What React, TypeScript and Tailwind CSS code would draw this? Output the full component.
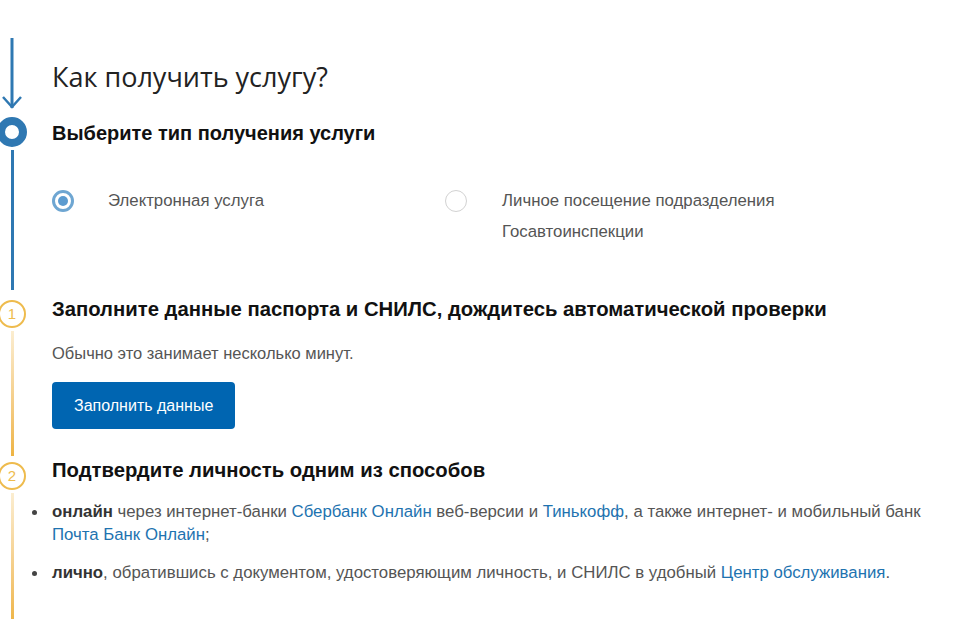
import React from 'react';

const arial = { fontFamily: '"Liberation Sans", Arial, sans-serif' };

const Radio = ({ checked }: { checked?: boolean }) =>
  checked ? (
    <span className="flex h-[22px] w-[22px] shrink-0 items-center justify-center rounded-full border-[3px] border-[#6ea6d2]">
      <span className="block h-[10px] w-[10px] rounded-full bg-[#5b9bd0]" />
    </span>
  ) : (
    <span className="block h-[22px] w-[22px] shrink-0 rounded-full border border-[#d2d2d2]" />
  );

const StepNumber = ({ n }: { n: number }) => (
  <div className="flex h-[28px] w-[28px] shrink-0 items-center justify-center rounded-full border-[2.5px] border-[#eebb4d] bg-white text-[15px] text-[#eebb4d]">
    {n}
  </div>
);

const App = () => {
  return (
    <div className="min-h-screen bg-white pt-[38px] text-[#555]" style={arial}>
      {/* intro */}
      <div className="flex h-[79px]">
        <div className="flex w-[24px] shrink-0 justify-center">
          <svg width="24" height="72" viewBox="0 0 24 72" fill="none">
            <line x1="12" y1="0" x2="12" y2="70" stroke="#2f78b2" strokeWidth="3" />
            <polyline points="3,59 12,69 21,59" stroke="#2f78b2" strokeWidth="2.5" fill="none" />
          </svg>
        </div>
        <h1
          className="ml-[28px] mt-[22px] text-[27px] leading-[34px] text-[#222]"
          style={{ fontFamily: '"Open Sans", sans-serif' }}
        >
          Как получить услугу?
        </h1>
      </div>

      {/* step: type */}
      <div className="flex">
        <div className="flex w-[24px] shrink-0 flex-col items-center">
          <div className="h-[30px] w-[30px] shrink-0 rounded-full border-[8px] border-[#2f78b2]" />
          <div className="mb-[10px] mt-[3px] w-[3px] flex-1 bg-[#2f78b2]" />
        </div>
        <div className="ml-[28px] pb-[53px]">
          <h2 className="text-[20px] font-bold leading-[32px] text-[#111]">Выберите тип получения услуги</h2>
          <div className="mt-[36px] flex">
            <label className="flex w-[393px] items-start">
              <span className="mt-[4.5px]">
                <Radio checked />
              </span>
              <span className="ml-[34px] text-[16.8px] leading-[31px]">Электронная услуга</span>
            </label>
            <label className="flex items-start">
              <span className="mt-[4.5px]">
                <Radio />
              </span>
              <span className="ml-[35px] w-[300px] text-[16.8px] leading-[31px]">
                Личное посещение подразделения Госавтоинспекции
              </span>
            </label>
          </div>
        </div>
      </div>

      {/* step 1 */}
      <div className="flex">
        <div className="flex w-[24px] shrink-0 flex-col items-center">
          <StepNumber n={1} />
          <div className="mb-[6px] mt-[3px] w-[3px] flex-1 bg-gradient-to-b from-[#fbedd0] to-[#eeb442]" />
        </div>
        <div className="ml-[28px] pb-[33px]">
          <h2 className="-mt-[5px] text-[20.3px] font-bold leading-[28px] text-[#111]">
            Заполните данные паспорта и СНИЛС, дождитесь автоматической проверки
          </h2>
          <p className="mt-[18px] text-[16.5px] leading-[24px]">Обычно это занимает несколько минут.</p>
          <button className="mt-[17px] h-[47px] rounded-[4px] bg-[#0065b1] px-[22px] text-[16px] text-white">
            Заполнить данные
          </button>
        </div>
      </div>

      {/* step 2 */}
      <div className="flex">
        <div className="flex w-[24px] shrink-0 flex-col items-center">
          <StepNumber n={2} />
          <div className="mt-[3px] w-[3px] flex-1 bg-gradient-to-b from-[#fbedd0] to-[#eeb442]" />
        </div>
        <div className="ml-[28px] pb-[40px]">
          <h2 className="-mt-[6px] text-[20.3px] font-bold leading-[28px] text-[#111]">
            Подтвердите личность одним из способов
          </h2>
          <ul className="mt-[16px] w-[885px] text-[16.8px] leading-[23px]">
            <li className="relative">
              <span className="absolute left-[-20px] top-[10px] h-[5px] w-[5px] rounded-full bg-[#444]" />
              <b className="text-[#333]">онлайн</b> через интернет-банки{' '}
              <a className="text-[#1e73b0]">Сбербанк Онлайн</a> веб-версии и{' '}
              <a className="text-[#1e73b0]">Тинькофф</a>, а также интернет- и мобильный банк{' '}
              <a className="text-[#1e73b0]">Почта Банк Онлайн</a>;
            </li>
            <li className="relative mt-[15px]">
              <span className="absolute left-[-20px] top-[10px] h-[5px] w-[5px] rounded-full bg-[#444]" />
              <b className="text-[#333]">лично</b>, обратившись с документом, удостоверяющим личность, и СНИЛС в удобный{' '}
              <a className="text-[#1e73b0]">Центр обслуживания</a>.
            </li>
          </ul>
        </div>
      </div>
    </div>
  );
};

export default App;
